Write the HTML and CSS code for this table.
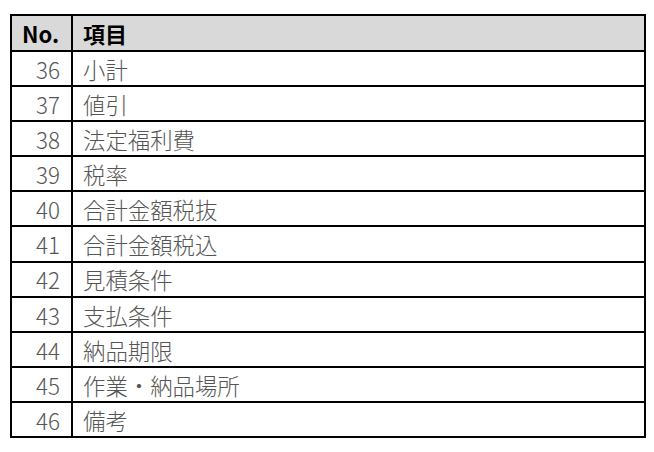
FILE: index.html
```html
<!DOCTYPE html>
<html lang="ja">
<head>
<meta charset="utf-8">
<link rel="stylesheet" href="styles.css">
</head>
<body>
<table class="items">
  <thead>
    <tr><th class="no">No.</th><th class="name">項目</th></tr>
  </thead>
  <tbody>
    <tr><td class="no">36</td><td class="name">小計</td></tr>
    <tr><td class="no">37</td><td class="name">値引</td></tr>
    <tr><td class="no">38</td><td class="name">法定福利費</td></tr>
    <tr><td class="no">39</td><td class="name">税率</td></tr>
    <tr><td class="no">40</td><td class="name">合計金額税抜</td></tr>
    <tr><td class="no">41</td><td class="name">合計金額税込</td></tr>
    <tr><td class="no">42</td><td class="name">見積条件</td></tr>
    <tr><td class="no">43</td><td class="name">支払条件</td></tr>
    <tr><td class="no">44</td><td class="name">納品期限</td></tr>
    <tr><td class="no">45</td><td class="name">作業・納品場所</td></tr>
    <tr><td class="no">46</td><td class="name">備考</td></tr>
  </tbody>
</table>
</body>
</html>
```
FILE: styles.css
```css
html, body {
  margin: 0;
  padding: 0;
  background: #ffffff;
}
body {
  padding: 14px 0 0 10px;
  font-family: "Noto Sans CJK JP", "Noto Sans", sans-serif;
}
.items {
  border-collapse: separate;
  border-spacing: 0;
  width: 636px;
  border-left: 2px solid #000;
  border-top: 2px solid #000;
  table-layout: fixed;
}
.items th, .items td {
  border-right: 2px solid #000;
  border-bottom: 2px solid #000;
  padding: 0;
  line-height: 1;
}
.items th {
  height: 34px;
  background: #d9d9d9;
  color: #000;
  font-size: 22px;
  font-weight: 700;
  text-align: left;
}
.items td {
  height: 32.1px;
  color: #555555;
  font-size: 22.4px;
  font-weight: 300;
  padding-top: 1px;
}
.items th.no {
  width: 49px;
  padding-left: 10px;
}
.items td.no {
  width: 48px;
  text-align: right;
  padding-right: 11px;
}
.items .name {
  padding-left: 10px;
}
```
